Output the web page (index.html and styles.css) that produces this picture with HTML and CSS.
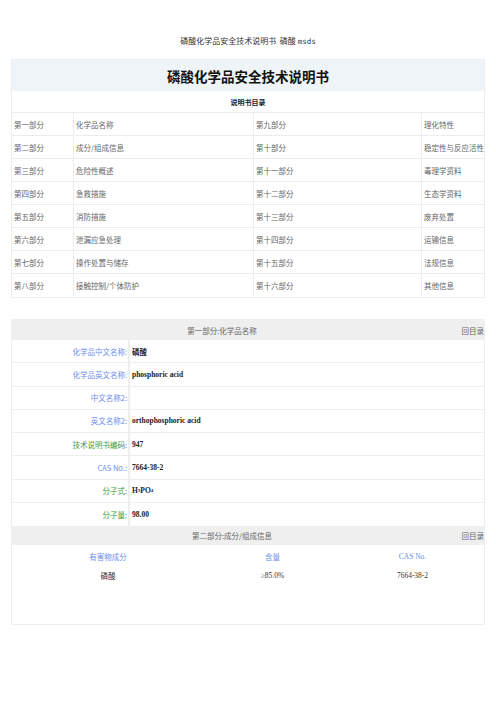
FILE: index.html
```html
<!DOCTYPE html>
<html lang="zh">
<head>
<meta charset="utf-8">
<title>磷酸化学品安全技术说明书</title>
<link rel="stylesheet" href="styles.css">
</head>
<body>
<div class="page">
  <h1 class="doc-title">磷酸化学品安全技术说明书&nbsp; 磷酸 <span class="mono">msds</span></h1>

  <section class="box toc">
    <div class="toc-head">磷酸化学品安全技术说明书</div>
    <div class="toc-sub">说明书目录</div>
    <div class="toc-grid">
      <div class="c1">第一部分</div><div class="c2">化学品名称</div><div class="c3">第九部分</div><div class="c4">理化特性</div>
      <div class="c1">第二部分</div><div class="c2">成分/组成信息</div><div class="c3">第十部分</div><div class="c4">稳定性与反应活性</div>
      <div class="c1">第三部分</div><div class="c2">危险性概述</div><div class="c3">第十一部分</div><div class="c4">毒理学资料</div>
      <div class="c1">第四部分</div><div class="c2">急救措施</div><div class="c3">第十二部分</div><div class="c4">生态学资料</div>
      <div class="c1">第五部分</div><div class="c2">消防措施</div><div class="c3">第十三部分</div><div class="c4">废弃处置</div>
      <div class="c1">第六部分</div><div class="c2">泄漏应急处理</div><div class="c3">第十四部分</div><div class="c4">运输信息</div>
      <div class="c1">第七部分</div><div class="c2">操作处置与储存</div><div class="c3">第十五部分</div><div class="c4">法规信息</div>
      <div class="c1">第八部分</div><div class="c2">接触控制/个体防护</div><div class="c3">第十六部分</div><div class="c4">其他信息</div>
    </div>
  </section>

  <section class="box detail">
    <div class="sec-head">
      <div class="sec-title">第一部分:化学品名称</div>
      <div class="sec-back">回目录</div>
    </div>
    <div class="kv">
      <div class="k blue">化学品中文名称:</div><div class="v">磷酸</div>
      <div class="k blue">化学品英文名称:</div><div class="v">phosphoric acid</div>
      <div class="k blue">中文名称2:</div><div class="v"></div>
      <div class="k blue">英文名称2:</div><div class="v">orthophosphoric acid</div>
      <div class="k green">技术说明书编码:</div><div class="v">947</div>
      <div class="k blue">CAS No.:</div><div class="v">7664-38-2</div>
      <div class="k green">分子式:</div><div class="v">H<sub>3</sub>PO<sub>4</sub></div>
      <div class="k green">分子量:</div><div class="v">98.00</div>
    </div>
    <div class="sec-head sec-head--wide">
      <div class="sec-title">第二部分:成分/组成信息</div>
      <div class="sec-back">回目录</div>
    </div>
    <div class="comp">
      <div class="ch">有害物成分</div><div class="ch">含量</div><div class="ch">CAS No.</div>
      <div class="cv">磷酸</div><div class="cv">≥85.0%</div><div class="cv">7664-38-2</div>
    </div>
  </section>
</div>
</body>
</html>
```
FILE: styles.css
```css
html, body {
  margin: 0;
  padding: 0;
  background: #fff;
}
body {
  font-family: "Liberation Serif", "Noto Sans CJK SC", serif;
  color: #555;
}
.page {
  width: 474px;
  margin: 0 11px;
  padding-top: 35px;
}
.doc-title {
  margin: 0 0 12px;
  height: 12px;
  line-height: 12px;
  text-align: center;
  font-family: "Noto Sans CJK SC", sans-serif;
  font-weight: normal;
  font-size: 8px;
  color: #333;
}
.mono {
  font-family: "DejaVu Sans Mono", monospace;
  font-size: 7.5px;
}
.box {
  border: 1px solid #eeeeee;
  box-sizing: border-box;
}
.toc-head {
  height: 31px;
  background: #eef4f7;
  display: flex;
  align-items: center;
  justify-content: center;
  font-family: "Noto Sans CJK SC", sans-serif;
  font-weight: 700;
  font-size: 13.5px;
  color: #111;
}
.toc-sub {
  height: 22px;
  display: flex;
  align-items: center;
  justify-content: center;
  font-family: "Noto Sans CJK SC", sans-serif;
  font-weight: 700;
  font-size: 7px;
  color: #222;
  border-bottom: 1px solid #ececec;
  box-sizing: border-box;
}
.toc-grid {
  display: grid;
  grid-template-columns: 62px 180px 168px 1fr;
  grid-auto-rows: 23px;
}
.toc-grid > div {
  display: flex;
  align-items: center;
  padding-left: 2px;
  font-size: 7.5px;
  font-family: "Noto Sans CJK SC", serif;
  color: #666;
  border-bottom: 1px solid #ececec;
  white-space: nowrap;
  box-sizing: border-box;
}
.toc-grid > div:nth-last-child(-n+4) {
  border-bottom: none;
}
.toc-grid .c1, .toc-grid .c2, .toc-grid .c3 {
  border-right: 1px solid #ececec;
}

.detail {
  margin-top: 21px;
  height: 306px;
}
.sec-head {
  height: 20px;
  background: #efefef;
  display: flex;
  align-items: center;
  font-family: "Noto Sans CJK SC", serif;
  font-size: 7.5px;
  color: #666;
}
.sec-title {
  flex: 1;
  text-align: center;
}
.sec-back {
  width: 52px;
  text-align: right;
}
.sec-head--wide .sec-back {
  width: 32px;
}
.sec-head--wide {
  height: 19px;
}
.kv {
  display: grid;
  grid-template-columns: 118px 1fr;
  grid-auto-rows: 23.25px;
}
.kv > div {
  display: flex;
  align-items: center;
  border-bottom: 1px solid #eeeeee;
  box-sizing: border-box;
  font-size: 7.5px;
}
.kv > div:nth-last-child(-n+2) {
  border-bottom: none;
}
.k {
  justify-content: flex-end;
  padding-right: 1px;
  font-family: "Noto Sans CJK SC", serif;
  border-right: 2px solid #eeeeee;
}
.v {
  padding-left: 2px;
  font-family: "Liberation Serif", "Noto Sans CJK SC", serif;
  font-weight: 700;
  color: #222;
}
.v sub {
  font-size: 5px;
  vertical-align: -1px;
}
.blue { color: #6b8ef0; }
.green { color: #3d9c3d; }

.comp {
  display: grid;
  grid-template-columns: 192px 137px 1fr;
  grid-template-rows: 19px 19px;
  padding-top: 2px;
}
.comp > div {
  display: flex;
  align-items: center;
  justify-content: center;
  font-size: 7.5px;
  font-family: "Liberation Serif", "Noto Sans CJK SC", serif;
}
.ch { color: #6b8ef0; }
.cv { color: #333; }
```
